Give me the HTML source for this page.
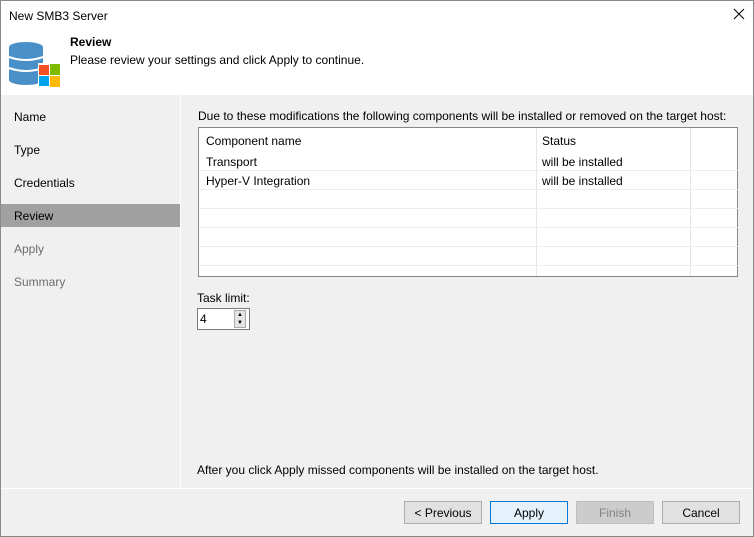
<!DOCTYPE html>
<html><head><style>
*{margin:0;padding:0;box-sizing:border-box}
body{width:754px;height:537px;position:relative;overflow:hidden;background:#f0f0f0;font-family:"Segoe UI","Liberation Sans",sans-serif;font-size:12px;color:#000}
.a{position:absolute}
.win{left:0;top:0;width:754px;height:537px;border:1px solid #888;}
.btn{position:absolute;top:501px;width:78px;height:23px;border:1px solid #adadad;background:#e1e1e1;text-align:center;line-height:22px}
.row{position:absolute;left:1px;width:538px;height:1px;background:#eeeeee}
</style></head><body>
<div class="a" style="left:0;top:0;width:754px;height:95px;background:#fff"></div>
<div class="a" style="left:9px;top:9px">New SMB3 Server</div>
<svg class="a" style="left:733px;top:8px" width="12" height="12"><path d="M1 1L11 11M11 1L1 11" stroke="#000" stroke-width="1"/></svg>
<svg class="a" style="left:6px;top:40px" width="54" height="50">
<ellipse cx="20" cy="7" rx="17" ry="5" fill="#4a90c8"/>
<rect x="3" y="7" width="34" height="33" fill="#4a90c8"/>
<ellipse cx="20" cy="40" rx="17" ry="5" fill="#4a90c8"/>
<path d="M3 17 Q20 23 37 17" stroke="#fff" stroke-width="2" fill="none"/>
<path d="M3 28 Q20 34 37 28" stroke="#fff" stroke-width="2" fill="none"/>
<rect x="32" y="23" width="22" height="26" fill="#fff"/>
<rect x="33" y="25" width="10" height="10" fill="#f25022"/>
<rect x="44" y="24" width="10" height="11" fill="#7fba00"/>
<rect x="33" y="36" width="10" height="10" fill="#00a4ef"/>
<rect x="44" y="36" width="10" height="11" fill="#ffb900"/>
</svg>
<div class="a" style="left:70px;top:35px;font-weight:bold">Review</div>
<div class="a" style="left:70px;top:53px">Please review your settings and click Apply to continue.</div>
<div class="a" style="left:180px;top:95px;width:1px;height:393px;background:#fff"></div>
<div class="a" style="left:0;top:204px;width:180px;height:23px;background:#a0a0a0"></div>
<div class="a" style="left:14px;top:110px">Name</div>
<div class="a" style="left:14px;top:143px">Type</div>
<div class="a" style="left:14px;top:176px">Credentials</div>
<div class="a" style="left:14px;top:209px">Review</div>
<div class="a" style="left:14px;top:242px;color:#6d6d6d">Apply</div>
<div class="a" style="left:14px;top:275px;color:#6d6d6d">Summary</div>
<div class="a" style="left:198px;top:109px">Due to these modifications the following components will be installed or removed on the target host:</div>
<div class="a" style="left:198px;top:127px;width:540px;height:150px;background:#fff;border:1px solid #828790">
<div class="a" style="left:7px;top:6px">Component name</div>
<div class="a" style="left:343px;top:6px">Status</div>
<div class="a" style="left:337px;top:0;width:1px;height:148px;background:#e5e5e5"></div>
<div class="a" style="left:491px;top:0;width:1px;height:148px;background:#e5e5e5"></div>
<div class="a" style="left:7px;top:27px">Transport</div><div class="a" style="left:343px;top:27px">will be installed</div>
<div class="a" style="left:7px;top:46px">Hyper-V Integration</div><div class="a" style="left:343px;top:46px">will be installed</div>
<div class="row" style="top:42px"></div><div class="row" style="top:61px"></div><div class="row" style="top:80px"></div><div class="row" style="top:99px"></div><div class="row" style="top:118px"></div><div class="row" style="top:137px"></div>
</div>
<div class="a" style="left:197px;top:291px">Task limit:</div>
<div class="a" style="left:197px;top:308px;width:53px;height:22px;background:#fff;border:1px solid #7a7a7a;padding-left:2px;line-height:20px">4</div>
<div class="a" style="left:234px;top:310px;width:12px;height:18px;background:#e5e5e5;border:1px solid #aaa;font-size:6px;text-align:center;line-height:8px">▲<br>▼</div>
<div class="a" style="left:197px;top:463px">After you click Apply missed components will be installed on the target host.</div>
<div class="a" style="left:1px;top:488px;width:752px;height:1px;background:#fff"></div>
<div class="btn" style="left:404px">&lt; Previous</div>
<div class="btn" style="left:490px;border-color:#0078d7;background:#e5f1fb">Apply</div>
<div class="btn" style="left:576px;background:#cccccc;border-color:#bfbfbf;color:#838383">Finish</div>
<div class="btn" style="left:662px">Cancel</div>
<div class="a win"></div>
</body></html>
